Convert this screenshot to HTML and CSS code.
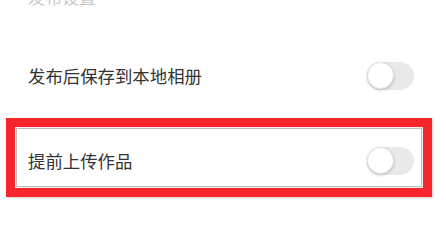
FILE: index.html
```html
<!DOCTYPE html>
<html lang="zh-CN">
<head>
<meta charset="utf-8">
<link rel="stylesheet" href="styles.css">
</head>
<body>
<div class="page">
  <div class="section-title">发布设置</div>
  <div class="row">
    <span class="label">发布后保存到本地相册</span>
    <span class="switch"><span class="knob"></span></span>
  </div>
  <div class="row highlighted">
    <span class="label">提前上传作品</span>
    <span class="switch"><span class="knob"></span></span>
    <div class="mark"></div>
  </div>
</div>
</body>
</html>
```
FILE: styles.css
```css
html, body {
  margin: 0;
  padding: 0;
  background: #ffffff;
  overflow: hidden;
}
.page {
  width: 446px;
  height: 211px;
  overflow: hidden;
  font-family: "Noto Sans CJK SC", "Noto Sans", sans-serif;
}
.section-title {
  margin-top: -15px;
  margin-bottom: 24px;
  padding-left: 28px;
  font-size: 17px;
  line-height: 24px;
  color: #c9c9c9;
}
.row {
  position: relative;
  height: 85px;
  display: flex;
  align-items: center;
  justify-content: space-between;
  padding: 0 32px 0 28px;
}
.label {
  font-size: 17.4px;
  color: #333333;
}
.switch {
  width: 47px;
  height: 28px;
  border-radius: 14px;
  background: #e9e9e9;
  display: flex;
  align-items: center;
}
.knob {
  width: 27px;
  height: 27px;
  border-radius: 50%;
  background: #ffffff;
  border: 1px solid #e2e2e2;
  box-sizing: border-box;
  box-shadow: 0 1px 3px rgba(0, 0, 0, 0.22);
}
.mark {
  position: absolute;
  left: 6px;
  top: 0;
  width: 426px;
  height: 79px;
  box-sizing: border-box;
  border: 9px solid #f5252b;
  box-shadow: inset 0 0 0 1px #f2f2f2, inset 0 0 0 2px #bdbdbd, 1px 1px 2px rgba(0, 0, 0, 0.2);
  pointer-events: none;
}
```
